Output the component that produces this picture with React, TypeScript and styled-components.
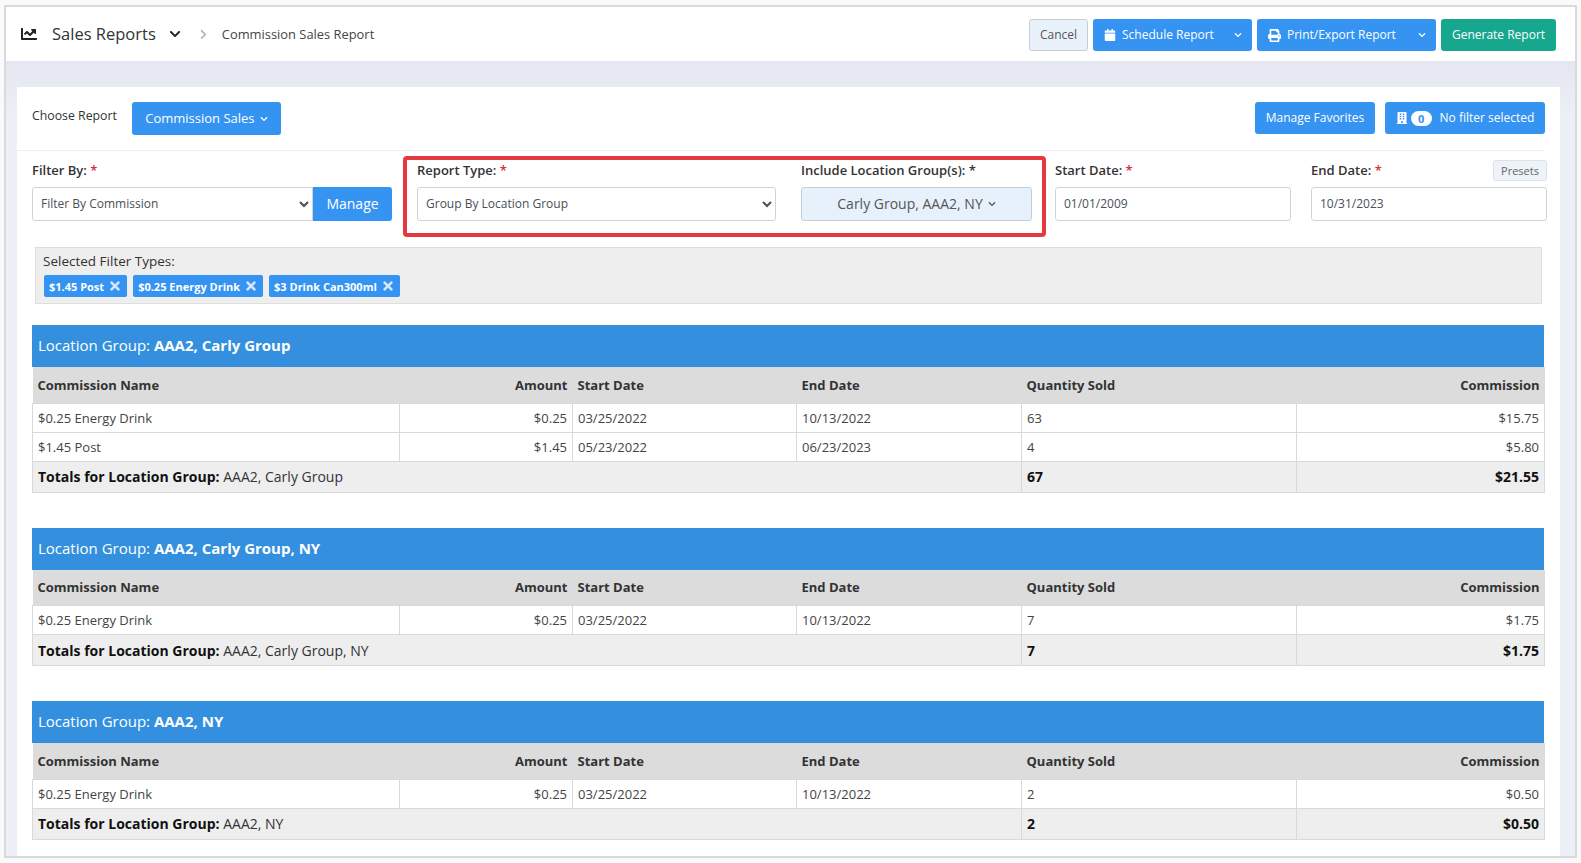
import React from "react";
import styled, { createGlobalStyle } from "styled-components";
import {
  FaBuilding,
  FaCalendar,
  FaChartLine,
  FaChevronDown,
  FaChevronRight,
  FaPrint,
  FaTimes,
} from "react-icons/fa";

const GlobalStyle = createGlobalStyle`
  html, body {
    margin: 0;
    height: 863px;
    overflow: hidden;
    background: #fafafa;
    font-family: "Open Sans", "Liberation Sans", sans-serif;
    font-size: 13px;
    color: #333;
  }
  * { box-sizing: border-box; }
`;

type Row = { name: string; amount: string; start: string; end: string; qty: string; commission: string };
type Group = { title: string; rows: Row[]; qty: string; total: string };

const energy = { name: "$0.25 Energy Drink", amount: "$0.25", start: "03/25/2022", end: "10/13/2022" };

const groups: Group[] = [
  {
    title: "AAA2, Carly Group",
    rows: [
      { ...energy, qty: "63", commission: "$15.75" },
      { name: "$1.45 Post", amount: "$1.45", start: "05/23/2022", end: "06/23/2023", qty: "4", commission: "$5.80" },
    ],
    qty: "67",
    total: "$21.55",
  },
  {
    title: "AAA2, Carly Group, NY",
    rows: [{ ...energy, qty: "7", commission: "$1.75" }],
    qty: "7",
    total: "$1.75",
  },
  {
    title: "AAA2, NY",
    rows: [{ ...energy, qty: "2", commission: "$0.50" }],
    qty: "2",
    total: "$0.50",
  },
];

const filterTags = ["$1.45 Post", "$0.25 Energy Drink", "$3 Drink Can300ml"];

function ReportTable({ group }: { group: Group }) {
  return (
    <ReportBlock>
      <GroupTitle>
        Location Group: <strong>{group.title}</strong>
      </GroupTitle>
      <Table>
        <colgroup>
          <col width={367} />
          <col width={173} />
          <col width={224} />
          <col width={225} />
          <col width={275} />
          <col width={248} />
        </colgroup>
        <thead>
          <tr>
            <HeadCell>Commission Name</HeadCell>
            <HeadCell $right>Amount</HeadCell>
            <HeadCell>Start Date</HeadCell>
            <HeadCell>End Date</HeadCell>
            <HeadCell>Quantity Sold</HeadCell>
            <HeadCell $right>Commission</HeadCell>
          </tr>
        </thead>
        <tbody>
          {group.rows.map((row) => (
            <tr key={row.name}>
              <Cell>{row.name}</Cell>
              <Cell $right>{row.amount}</Cell>
              <Cell>{row.start}</Cell>
              <Cell>{row.end}</Cell>
              <Cell>{row.qty}</Cell>
              <Cell $right>{row.commission}</Cell>
            </tr>
          ))}
          <tr>
            <TotalCell colSpan={4}>
              <b>Totals for Location Group:</b> {group.title}
            </TotalCell>
            <TotalCell>
              <b>{group.qty}</b>
            </TotalCell>
            <TotalCell $right>
              <b>{group.total}</b>
            </TotalCell>
          </tr>
        </tbody>
      </Table>
    </ReportBlock>
  );
}

export default function App() {
  return (
    <>
      <GlobalStyle />
      <Frame>
        <TopBar>
          <ModuleIcon>
            <FaChartLine size={16} />
          </ModuleIcon>
          <ModuleName>Sales Reports</ModuleName>
          <ModuleCaret>
            <FaChevronDown size={12} />
          </ModuleCaret>
          <Crumb>
            <FaChevronRight size={11} />
          </Crumb>
          <PageName>Commission Sales Report</PageName>
          <TopActions>
            <LightButton>Cancel</LightButton>
            <SplitButton $width={159}>
              <FaCalendar size={12} />
              <span>Schedule Report</span>
              <SplitCaret>
                <FaChevronDown size={8} />
              </SplitCaret>
            </SplitButton>
            <SplitButton $width={179}>
              <FaPrint size={13} />
              <span>Print/Export Report</span>
              <SplitCaret>
                <FaChevronDown size={8} />
              </SplitCaret>
            </SplitButton>
            <GenerateButton>Generate Report</GenerateButton>
          </TopActions>
        </TopBar>
        <Content>
          <Card>
            <ChooseBar>
              <ChooseLabel>Choose Report</ChooseLabel>
              <ChooseButton>
                Commission Sales <FaChevronDown size={8} />
              </ChooseButton>
              <ChooseActions>
                <BlueButton $width={120}>Manage Favorites</BlueButton>
                <BlueButton $width={160}>
                  <FaBuilding size={12} />
                  <CountBadge>0</CountBadge>
                  <FilterLabel>No filter selected</FilterLabel>
                </BlueButton>
              </ChooseActions>
            </ChooseBar>
            <FilterRow>
              <Field $width={360}>
                <FieldLabel>
                  Filter By: <Required>*</Required>
                </FieldLabel>
                <InputGroup>
                  <Select defaultValue="commission" $joined>
                    <option value="commission">Filter By Commission</option>
                  </Select>
                  <ManageButton>Manage</ManageButton>
                </InputGroup>
              </Field>
              <Highlight>
                <Field $width={359}>
                  <FieldLabel>
                    Report Type: <Required>*</Required>
                  </FieldLabel>
                  <Select defaultValue="group">
                    <option value="group">Group By Location Group</option>
                  </Select>
                </Field>
                <Field $width={231}>
                  <FieldLabel>Include Location Group(s): *</FieldLabel>
                  <LocationButton>
                    Carly Group, AAA2, NY <FaChevronDown size={8} />
                  </LocationButton>
                </Field>
              </Highlight>
              <DateField>
                <FieldLabel>
                  Start Date: <Required>*</Required>
                </FieldLabel>
                <DateInput defaultValue="01/01/2009" />
              </DateField>
              <DateField>
                <FieldLabel>
                  End Date: <Required>*</Required>
                </FieldLabel>
                <PresetsButton>Presets</PresetsButton>
                <DateInput defaultValue="10/31/2023" />
              </DateField>
            </FilterRow>
            <SelectedPanel>
              <PanelTitle>Selected Filter Types:</PanelTitle>
              <TagList>
                {filterTags.map((tag) => (
                  <Tag key={tag}>
                    {tag}
                    <FaTimes size={14} />
                  </Tag>
                ))}
              </TagList>
            </SelectedPanel>
            {groups.map((group) => (
              <ReportTable key={group.title} group={group} />
            ))}
          </Card>
        </Content>
      </Frame>
    </>
  );
}

const Frame = styled.div`
  margin: 5px 0 0 4px;
  width: 1573px;
  height: 853px;
  border: 2px solid #d9dadc;
  display: flex;
  flex-direction: column;
  overflow: hidden;
  background: #eceef5;
`;

const TopBar = styled.header`
  height: 54px;
  flex-shrink: 0;
  padding: 0 19px 0 15px;
  background: #fff;
  display: flex;
  align-items: center;
`;

const ModuleIcon = styled.span`
  display: flex;
  color: #222;
  width: 31px;
`;

const ModuleName = styled.span`
  font-size: 16.5px;
  color: #333;
  margin-bottom: 2px;
`;

const ModuleCaret = styled.span`
  display: flex;
  margin-left: 13px;
  color: #222;
`;

const Crumb = styled.span`
  display: flex;
  margin-left: 17px;
  color: #b5b5b5;
`;

const PageName = styled.span`
  margin-left: 13px;
  font-size: 12.9px;
  color: #444;
`;

const TopActions = styled.div`
  margin: 2px 0 0 auto;
  display: flex;
  gap: 5px;
`;

const BaseButton = styled.button`
  height: 32px;
  border: none;
  border-radius: 3px;
  padding: 0 10px 2px;
  font-family: inherit;
  font-size: 12px;
  color: #fff;
  background: #3593f2;
  display: flex;
  align-items: center;
  white-space: nowrap;
  svg {
    flex-shrink: 0;
    margin-top: 2px;
  }
`;

const LightButton = styled(BaseButton)`
  width: 59px;
  justify-content: center;
  color: #555;
  background: #e9f2fb;
  border: 1px solid #c6ced6;
`;

const SplitButton = styled(BaseButton)<{ $width: number }>`
  width: ${(p) => p.$width}px;
  padding: 0 0 2px 11px;
  gap: 6px;
`;

const SplitCaret = styled.span`
  margin-left: auto;
  width: 28px;
  display: flex;
  justify-content: center;
`;

const GenerateButton = styled(BaseButton)`
  width: 115px;
  justify-content: center;
  background: #17a78f;
`;

const Content = styled.main`
  flex: 1;
  min-height: 0;
  padding: 26px 15px 0 11px;
  background: linear-gradient(#e4e7f1, #edf0f6 60px);
`;

const Card = styled.section`
  height: 100%;
  padding: 0 16px 0 15px;
  background: #fff;
  overflow: hidden;
`;

const ChooseBar = styled.div`
  height: 64px;
  margin: 0 -1px 0 -15px;
  padding: 15px 0 0 15px;
  border-bottom: 1px solid #eeeeee;
  display: flex;
  align-items: flex-start;
`;

const ChooseLabel = styled.span`
  margin-top: 5px;
  font-size: 12.3px;
  color: #333;
`;

const ChooseButton = styled(BaseButton)`
  margin-left: 15px;
  width: 149px;
  height: 33px;
  justify-content: center;
  gap: 5px;
  font-size: 13px;
  padding: 0 0 2px;
`;

const ChooseActions = styled.div`
  margin-left: auto;
  display: flex;
  gap: 10px;
`;

const BlueButton = styled(BaseButton)<{ $width: number }>`
  width: ${(p) => p.$width}px;
  justify-content: center;
  padding: 0 0 2px;
`;

const CountBadge = styled.span`
  width: 21px;
  height: 15px;
  margin: 2px 0 0 3px;
  border-radius: 8px;
  background: #fff;
  color: #3593f2;
  font-size: 11px;
  font-weight: 700;
  line-height: 15px;
  text-align: center;
`;

const FilterLabel = styled.span`
  margin-left: 8px;
`;

const FilterRow = styled.div`
  display: flex;
  align-items: flex-start;
`;

const Field = styled.div<{ $width: number }>`
  width: ${(p) => p.$width}px;
  flex-shrink: 0;
  padding-top: 10px;
`;

const Highlight = styled.div`
  margin: 5px 0 0 11px;
  width: 643px;
  height: 81px;
  flex-shrink: 0;
  padding: 0 10px;
  border: 4px solid #e8383f;
  border-radius: 4px;
  display: flex;
  justify-content: space-between;
  & > div {
    padding-top: 1px;
  }
`;

const DateField = styled.div`
  position: relative;
  width: 236px;
  flex-shrink: 0;
  margin-left: 9px;
  padding-top: 10px;
  & + & {
    margin-left: 20px;
  }
`;

const FieldLabel = styled.label`
  display: block;
  height: 18px;
  margin-bottom: 8px;
  font-size: 13px;
  font-weight: 600;
  line-height: 18px;
  color: #333;
`;

const Required = styled.span`
  color: #d0313f;
`;

const InputGroup = styled.div`
  display: flex;
`;

const Select = styled.select<{ $joined?: boolean }>`
  width: ${(p) => (p.$joined ? "281px" : "100%")};
  height: 34px;
  padding: 0 4px 2px;
  border: 1px solid #ced4da;
  border-radius: ${(p) => (p.$joined ? "3px 0 0 3px" : "3px")};
  background: #fff;
  font-family: inherit;
  font-size: 12px;
  color: #495057;
`;

const ManageButton = styled(BaseButton)`
  width: 79px;
  height: 34px;
  justify-content: center;
  border-radius: 0 3px 3px 0;
  font-size: 14px;
  padding: 0 0 2px;
`;

const LocationButton = styled(BaseButton)`
  width: 100%;
  height: 34px;
  justify-content: center;
  gap: 5px;
  color: #555;
  background: #e6f1fb;
  border: 1px solid #c4ced8;
  font-size: 14px;
`;

const DateInput = styled.input`
  display: block;
  width: 100%;
  height: 34px;
  padding: 0 8px 2px;
  border: 1px solid #ced4da;
  border-radius: 3px;
  font-family: inherit;
  font-size: 12px;
  color: #495057;
`;

const PresetsButton = styled.button`
  position: absolute;
  top: 9px;
  right: 0;
  width: 54px;
  height: 21px;
  padding: 0;
  border: 1px solid #dbe3ea;
  border-radius: 3px;
  background: #edf3f9;
  font-family: inherit;
  font-size: 11px;
  color: #666;
`;

const SelectedPanel = styled.div`
  margin: 10px 2px 21px 3px;
  height: 57px;
  padding: 4px 7px;
  background: #eeeeee;
  border: 1px solid #dedede;
`;

const PanelTitle = styled.div`
  font-size: 13.5px;
  line-height: 18px;
  color: #333;
`;

const TagList = styled.div`
  margin: 5px 0 0 1px;
  display: flex;
  gap: 6px;
`;

const Tag = styled.span`
  height: 22px;
  padding: 0 5px;
  border-radius: 2px;
  background: #3593f2;
  color: #fff;
  font-size: 11px;
  font-weight: 700;
  display: flex;
  align-items: center;
  gap: 4px;
  white-space: nowrap;
  svg {
    color: #d5e8fb;
  }
`;

const ReportBlock = styled.div`
  margin-bottom: 35px;
`;

const GroupTitle = styled.div`
  height: 42px;
  padding-left: 6px;
  background: #3490de;
  color: #fff;
  font-size: 15px;
  line-height: 40px;
`;

const Table = styled.table`
  width: 1512px;
  table-layout: fixed;
  border-collapse: collapse;
`;

const HeadCell = styled.th<{ $right?: boolean }>`
  height: 36px;
  padding: 0 5px;
  background: #dcdcdc;
  font-size: 13px;
  font-weight: 700;
  color: #333;
  text-align: ${(p) => (p.$right ? "right" : "left")};
`;

const Cell = styled.td<{ $right?: boolean }>`
  height: 29px;
  padding: 0 5px;
  border: 1px solid #d9d9d9;
  font-size: 13px;
  color: #444;
  text-align: ${(p) => (p.$right ? "right" : "left")};
`;

const TotalCell = styled.td<{ $right?: boolean }>`
  height: 31px;
  padding: 0 5px;
  border: 1px solid #d9d9d9;
  background: #eeeeee;
  font-size: 14px;
  color: #333;
  text-align: ${(p) => (p.$right ? "right" : "left")};
  b {
    color: #111;
  }
`;
